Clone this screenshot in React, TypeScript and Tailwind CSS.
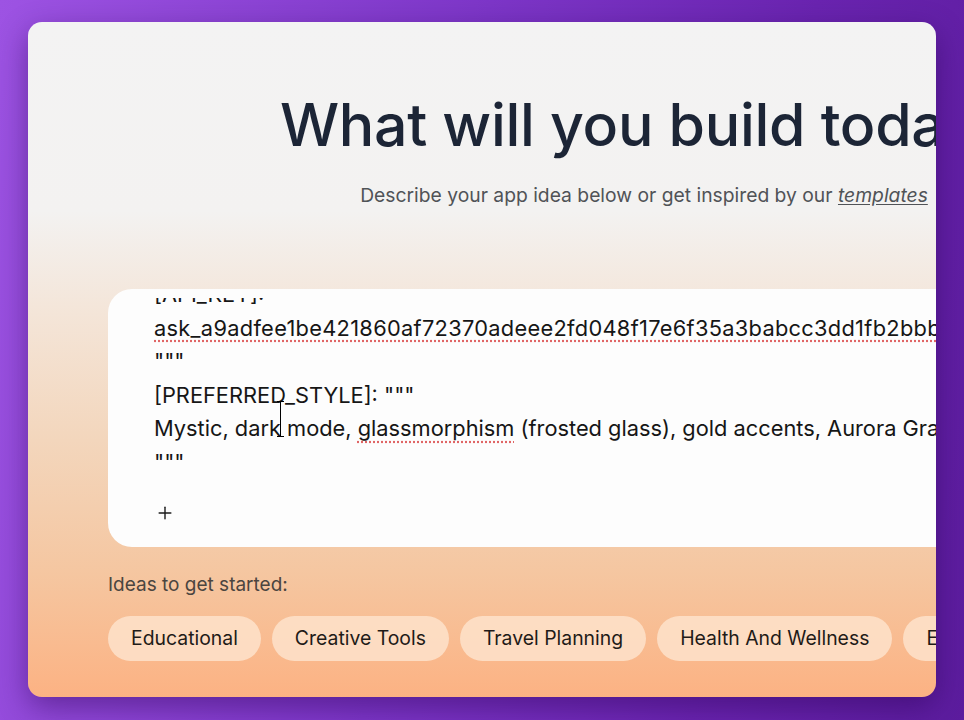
import React from "react";
import { Plus } from "lucide-react";

const chips = ["Educational", "Creative Tools", "Travel Planning", "Health And Wellness", "Entertainment", "Productivity"];

export default function App() {
  return (
    <div
      className="relative w-[964px] h-[720px] overflow-hidden bg-[linear-gradient(100deg,#9d53e3_0%,#7d36c8_45%,#6a24b0_75%,#5c1c9e_100%)]"
      style={{ fontFamily: "Inter, 'Noto Sans', sans-serif" }}
    >
      <div className="absolute left-[28px] top-[22px] w-[908px] h-[675px] rounded-[14px] overflow-hidden shadow-[0_10px_30px_rgba(40,0,80,0.45)] bg-[linear-gradient(180deg,#f3f3f3_0%,#f3f2f1_28%,#f4e6da_42%,#f3d6bc_62%,#f5c6a0_82%,#fcb283_100%)]">
        <div className="w-[1152px] pl-[80px] flex flex-col">
          <div className="w-[1072px] flex flex-col items-center">
            <h1 className="mt-[73px] text-[59px] leading-[60px] font-medium text-[#1c2536] tracking-[-0.3px] whitespace-nowrap">
              What will you build today?
            </h1>
            <p className="mt-[28px] text-[19.3px] leading-[24px] text-[#505357] whitespace-nowrap">
              Describe your app idea below or get inspired by our{" "}
              <span className="italic underline underline-offset-2">templates</span>
            </p>
          </div>
          <div className="mt-[82px] w-[1072px] h-[258px] rounded-[24px] bg-[#fdfdfd] relative">
            <div className="absolute left-[46px] right-[40px] top-[9px] h-[186px] overflow-hidden">
              <div className="mt-[-20px] text-[21.8px] leading-[33.5px] text-[#161616] whitespace-pre">
                <div>[API_KEY]:</div>
                <div>
                  <span className="underline decoration-dotted decoration-[#e06666] underline-offset-[5px] tracking-[0.3px]">
                    ask_a9adfee1be421860af72370adeee2fd048f17e6f35a3babcc3dd1fb2bbb7a1c
                  </span>
                </div>
                <div>"""</div>
                <div>[PREFERRED_STYLE]: """</div>
                <div>
                  Mystic, dark mode,{" "}
                  <span className="underline decoration-dotted decoration-[#e06666] underline-offset-[5px]">glassmorphism</span>{" "}
                  (frosted glass), gold accents, Aurora Gradients
                </div>
                <div>"""</div>
              </div>
            </div>
            <div className="absolute left-[172px] top-[112px] w-[1px] h-[36px] bg-black" />
            <div className="absolute left-[169px] top-[112px] w-[7px] h-[1px] bg-black" />
            <div className="absolute left-[169px] top-[147px] w-[7px] h-[1px] bg-black" />
            <div className="absolute left-[47px] top-[214px] text-[#1b1b1b]">
              <Plus size={20} strokeWidth={1.7} />
            </div>
          </div>
          <div className="mt-[27px] text-[19px] leading-[22px] text-[#4b4540]">Ideas to get started:</div>
          <div className="mt-[20px] flex gap-[11px]">
            {chips.map((c) => (
              <div
                key={c}
                className="h-[45px] px-[23px] rounded-full bg-[#fde0c8]/90 flex items-center text-[19.4px] text-[#1f1b18] whitespace-nowrap"
              >
                {c}
              </div>
            ))}
          </div>
        </div>
      </div>
    </div>
  );
}
